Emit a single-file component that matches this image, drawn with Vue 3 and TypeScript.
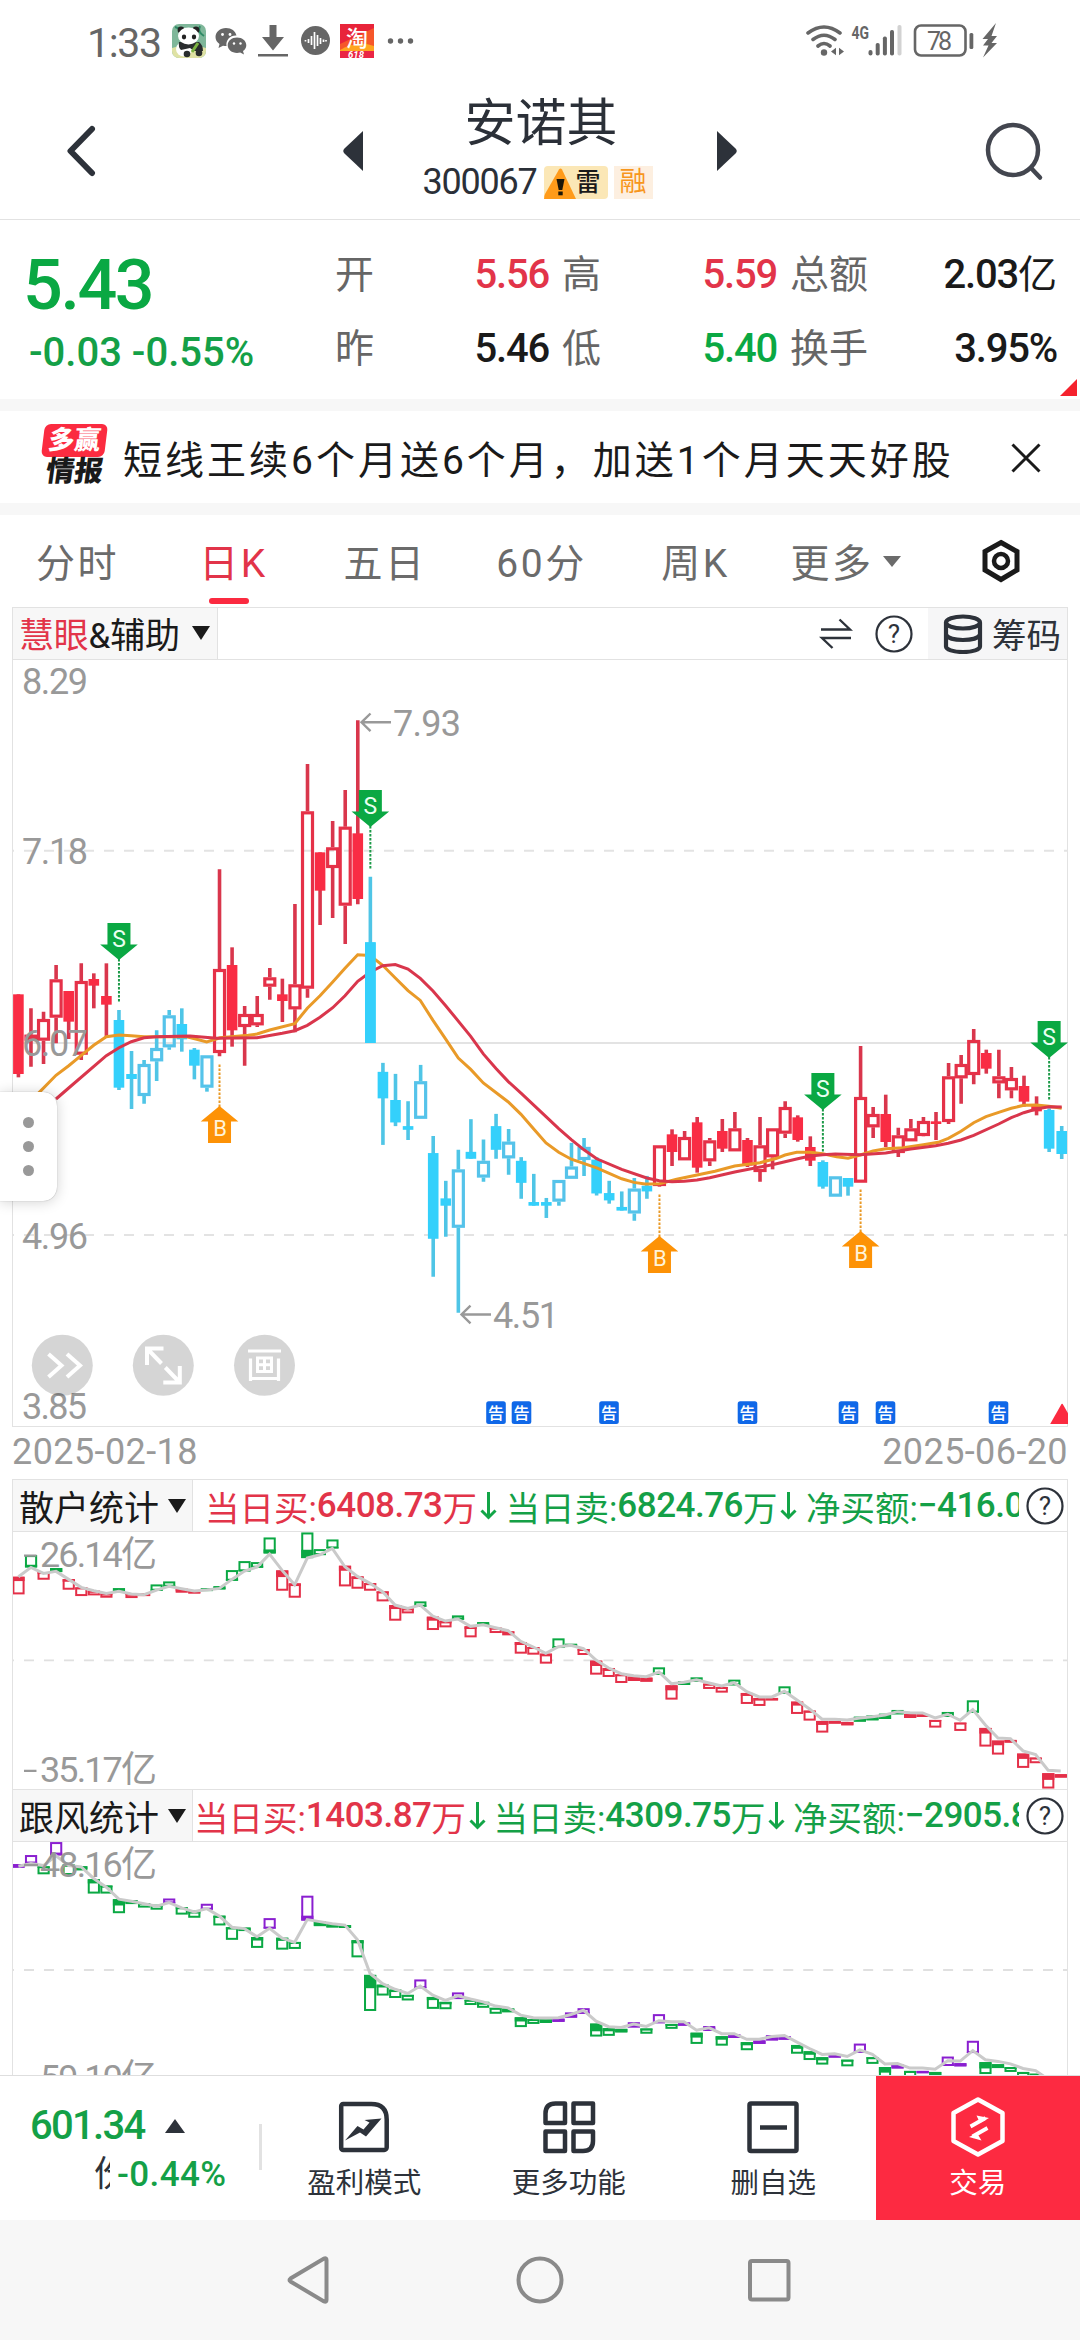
<script setup lang="ts">
type Candle = { x: number; color: string; hollow: boolean; high: number; low: number; top: number; bottom: number }
type Bar = { x: number; color: string; top: number; bottom: number; fillY: number; fillH: number }
type Block = { base: number; unit: number; rows: string }
type LineBlock = { x0: number; base: number; unit: number; pts: number[] }

const RED = '#f92c44'
const CYAN = '#34d0fb'
const GREEN = '#0aa843'
const PURPLE = '#8a1fd0'
const slotX = (i: number): number => 18.4 + 12.57 * i

// Each row: kind, high, body top, body bottom, low.
// R/C = solid red/cyan body, r/c = outlined body.
const candleBlocks: Block[] = [
  {
    base: 650, unit: 3,
    rows: `R 1033 1033 1272 1282;r 1075 1154 1172 1250;r 1085 1107 1172 1242;r 945 988 1103 1180;R 1023 1023 1115 1167;
r 940 993 1214 1230;R 970 987 1007 1075;R 940 1038 1064 1162;C 1080 1110 1313 1320;C 1203 1272 1287 1377;c 1230 1242 1338 1361;
c 1141 1194 1234 1293;c 1080 1096 1192 1199;C 1075 1122 1168 1205;C 1194 1199 1247 1288;c 1216 1216 1313 1325;r 658 957 1209 1219;
R 892 945 1141 1190;r 1068 1092 1131 1247;r 1038 1092 1126 1131;r 954 982 1010 1049;R 986 1033 1053 1116;r 762 1003 1078 1147;
r 342 484 1016 1043;R 607 607 722 825;r 513 592 654 804;r 420 530 767 882;R 211 550 747 763;C 680 877 1179 1179`
  },
  {
    base: 700, unit: 2.45,
    rows: `C 889 911 976 1090;C 916 980 1035 1044;C 983 1044 1053 1078;c 894 934 1026 1026;C 1068 1110 1320 1413;
C 1178 1221 1239 1315;c 1102 1150 1293 1501;C 1027 1107 1124 1124;c 1077 1129 1170 1180;C 1014 1044 1102 1124;c 1051 1082 1123 1163;
C 1120 1129 1183 1222;C 1161 1230 1239 1239;C 1220 1230 1239 1269;c 1176 1176 1229 1239;c 1085 1143 1173 1173;c 1073 1095 1127 1166;
C 1120 1126 1209 1214;C 1178 1208 1226 1234;C 1204 1242 1251 1251;c 1171 1197 1258 1276;C 1166 1190 1204 1222`
  },
  {
    base: 980, unit: 3,
    rows: `r 496 496 618 620;R 448 463 516 558;r 453 471 541 541;R 411 427 563 578;r 474 481 544 558;R 417 453 506 516;
r 396 445 514 514;R 474 480 557 561;r 411 496 576 605;r 445 445 532 568;r 364 381 461 474;R 406 412 480 485;R 469 501 542 558;
C 541 546 620 626;c 589 589 650 650;C 594 594 620 647;r 198 351 608 608;r 381 402 442 474;R 344 402 486 501;r 443 466 519 531;
r 417 445 484 484;r 411 423 468 469;R 396 424 432 480;r 249 289 426 432;r 225 252 295 371;r 147 180 285 313;R 209 219 266 281;
r 209 289 310 355;r 261 294 331 355;R 287 318 365 380;R 349 372 394 406;C 385 390 506 516;C 438 453 522 537`
  }
]

const candles: Candle[] = []
for (const b of candleBlocks) {
  for (const row of b.rows.split(';')) {
    const [kind, ...n] = row.trim().split(' ')
    const [high, top, bottom, low] = n.map((v) => b.base + Number(v) / b.unit)
    candles.push({
      x: slotX(candles.length),
      color: kind.toLowerCase() === 'r' ? RED : CYAN,
      hollow: kind === 'r' || kind === 'c',
      high, low, top, bottom
    })
  }
}

const linePoints = (blocks: LineBlock[]): string =>
  blocks
    .map((b) => {
      const out: string[] = []
      for (let k = 0; k < b.pts.length; k += 2) {
        out.push(`${(b.x0 + b.pts[k] / 3).toFixed(1)},${(b.base + b.pts[k + 1] / b.unit).toFixed(1)}`)
      }
      return out.join(' ')
    })
    .join(' ')

const fastLine = linePoints([
  { x0: 0, base: 650, unit: 3, pts: [95, 1348, 115, 1330, 168, 1276, 206, 1247, 243, 1217, 281, 1186, 319, 1160, 357, 1155, 394, 1157, 432, 1160, 560, 1160, 590, 1168, 620, 1176, 660, 1163, 745, 1156, 771, 1152, 809, 1140, 884, 1121, 922, 1075, 960, 1037, 998, 996, 1035, 955, 1073, 914] },
  { x0: 340, base: 700, unit: 2.45, pts: [90, 626, 128, 650, 166, 681, 204, 712, 241, 736, 279, 785, 317, 831, 355, 877, 392, 905, 430, 938, 505, 985, 543, 1015, 580, 1050, 618, 1085, 656, 1108, 694, 1125, 770, 1146, 845, 1173, 882, 1182, 915, 1186, 958, 1185] },
  { x0: 640, base: 980, unit: 3, pts: [110, 598, 171, 585, 225, 574, 284, 558, 360, 548, 410, 535, 435, 525, 470, 517, 511, 517, 548, 521, 590, 530, 624, 535, 661, 525, 699, 513, 737, 506, 790, 503, 850, 494, 895, 487, 925, 475, 963, 454, 1001, 428, 1038, 410, 1076, 397, 1114, 385, 1151, 376, 1189, 375, 1227, 379, 1265, 385] }
])
const slowLine = linePoints([
  { x0: 0, base: 650, unit: 3, pts: [168, 1347, 206, 1314, 319, 1217, 357, 1193, 394, 1175, 432, 1163, 469, 1160, 570, 1158, 650, 1165, 771, 1163, 847, 1150, 884, 1142, 922, 1126, 960, 1102, 998, 1073, 1035, 1037, 1073, 994] },
  { x0: 340, base: 700, unit: 2.45, pts: [90, 667, 128, 651, 166, 648, 204, 659, 241, 682, 279, 713, 317, 749, 392, 824, 430, 867, 468, 903, 505, 935, 543, 963, 618, 1021, 656, 1050, 694, 1077, 732, 1102, 770, 1124, 845, 1150, 920, 1171, 958, 1178] },
  { x0: 640, base: 980, unit: 3, pts: [96, 605, 133, 604, 171, 600, 209, 593, 284, 576, 397, 554, 473, 536, 511, 528, 548, 524, 586, 522, 661, 524, 737, 519, 812, 507, 887, 497, 925, 490, 963, 480, 1001, 466, 1076, 432, 1114, 413, 1151, 398, 1189, 387, 1227, 380, 1265, 381] }
])

const sells = [
  { x: slotX(8), y: 923, end: 1002 },
  { x: slotX(28), y: 790, end: 869 },
  { x: slotX(64), y: 1073, end: 1152 },
  { x: slotX(82), y: 1021, end: 1100 }
]
const buys = [
  { x: slotX(16), y: 1143, end: 1064 },
  { x: slotX(51), y: 1273, end: 1194 },
  { x: slotX(67), y: 1268, end: 1189 }
]
const notices = [496, 521.5, 609, 747.5, 848.5, 885.5, 998.5]

// Flow charts. Each row: colour key, box top, box bottom, filled part, line level.
// A falling bar fills from its top, a rising bar from its bottom.
const retailRows = `R 320 373 13 320;G 255 292 8 292;R 306 329 5 310;G 294 306 12 304;R 327 359 8 328;R 352 378 5 352;R 362 376 5 362;
R 370 383 4 370;G 354 366 4 364;R 371 384 4 372;R 370 378 8 374;G 343 362 4 360;G 334 350 4 349;R 356 368 8 356;R 360 371 8 363;
G 355 363 8 360;G 348 358 6 355;G 300 332 5 328;G 273 304 5 303;G 276 293 5 291;G 202 250 12 252;R 301 362 20 301;R 340 383 8 344;
G 187 264 25 264;G 237 255 5 254;G 208 235 4 235;R 287 349 15 290;R 319 356 8 319;R 339 362 6 340;R 364 394 5 365;R 405 452 12 405;
R 415 430 4 415;G 394 410 4 405;R 440 480 12 438;R 452 472 8 453;G 436 449 4 447;R 469 502 8 469;G 456 467 6 464;R 473 489 4 473;
R 484 496 5 482;R 516 551 9 514;R 531 554 5 531;R 551 581 8 550;G 505 534 4 530;G 521 531 9 526;R 537 555 5 536;R 572 614 16 570;
R 594 621 9 594;R 613 639 5 611;R 620 633 13 617;R 623 635 12 620;G 592 614 4 606;R 646 689 15 641;G 634 645 11 637;G 622 636 5 629;
R 641 657 5 639;R 651 668 5 648;G 629 646 5 638;R 669 702 9 665;R 684 708 8 681;R 684 691 7 681;G 649 671 4 664;R 695 732 12 690;
R 722 752 6 717;R 753 788 12 748;R 753 761 8 748;R 756 766 10 750;G 740 755 14 744;G 737 751 14 740;G 731 747 14 735;G 720 733 8 725;
R 732 744 12 728;R 733 741 8 729;R 750 773 4 744;G 726 741 6 733;R 758 783 4 751;G 691 728 4 719;R 774 830 17 765;R 812 854 14 804;
R 810 818 8 806;R 851 894 16 843;R 863 880 4 854;R 910 956 20 901;R 913 923 10 903`

const followRows = `P 214 224 10 220;P 188 213 6 212;G 220 243 5 218;P 151 189 8 190;G 215 245 6 218;G 220 232 8 222;G 257 298 12 255;
G 275 298 5 280;G 314 354 18 314;G 317 328 9 320;G 325 338 5 327;G 330 344 5 334;P 312 326 4 324;G 337 358 4 339;G 347 367 8 350;
P 327 344 5 341;G 361 389 6 362;G 394 430 6 394;G 395 405 9 398;G 422 453 10 421;P 368 398 4 397;G 424 458 9 425;G 436 456 4 437;
P 304 375 14 372;G 378 391 12 378;G 382 395 12 384;G 388 396 8 388;G 431 480 9 430;G 530 633 38 526;G 558 589 8 555;G 572 596 7 571;
G 587 603 4 583;P 543 568 4 562;G 593 627 9 588;G 607 628 7 603;P 580 599 5 590;G 601 616 4 599;G 607 624 8 607;G 624 641 4 619;
G 626 637 10 624;G 651 679 12 645;G 656 670 4 652;G 657 667 10 653;P 655 664 9 652;P 637 652 8 643;P 625 641 5 631;G 669 706 22 662;
G 682 704 9 678;G 684 694 10 680;P 665 680 8 670;G 683 698 5 677;P 642 668 4 661;G 670 684 5 664;P 666 675 9 664;G 695 727 14 688;
P 676 690 10 681;G 705 732 10 698;P 700 710 10 698;G 722 745 9 714;P 717 727 10 714;P 702 717 12 706;P 705 715 10 703;G 730 755 11 722;
G 748 773 10 740;G 765 786 9 757;P 756 766 10 755;G 772 791 5 763;P 726 752 4 744;G 765 784 4 757;G 793 822 16 784;P 786 797 11 783;
G 804 822 5 796;P 804 809 5 796;G 807 822 15 799;P 763 790 5 775;P 782 791 9 776;P 718 753 4 746;G 779 813 18 772;G 785 796 10 777;
G 793 807 5 784;G 807 824 6 797;G 812 830 8 803;G 835 850 8 828;G 840 850 8 832`

function parseFlow(src: string, base: number, unit: number): { bars: Bar[]; line: string } {
  const bars: Bar[] = []
  const pts: string[] = []
  src.split(';').forEach((row, i) => {
    const [k, a, b, f, l] = row.trim().split(' ')
    const top = base + Number(a) / unit
    const bottom = base + Number(b) / unit
    const fillH = Number(f) / unit
    const rising = src.includes('P') ? k === 'P' : k === 'G'
    bars.push({
      x: slotX(i) - 6,
      color: k === 'R' ? '#e42f48' : k === 'P' ? PURPLE : GREEN,
      top, bottom, fillH,
      fillY: rising ? bottom - fillH : top
    })
    pts.push(`${slotX(i).toFixed(1)},${(base + Number(l) / unit).toFixed(1)}`)
  })
  return { bars, line: pts.join(' ') }
}
const retail = parseFlow(retailRows, 1470, 3)
const follow = parseFlow(followRows, 1790, 2.851)

const panels = [
  {
    name: '散户统计', flow: retail, box: '13 1532 1055 257', cls: 'retail', mid: 1660.3,
    topLabel: '26.14亿', topY: 1566.5, lowLabel: '35.17亿', lowY: 1782,
    ticker: [
      { cls: 'buy', label: '当日买:', num: '6408.73', unit: '万' },
      { cls: 'sell', label: '当日卖:', num: '6824.76', unit: '万' },
      { cls: 'sell', label: '净买额:', num: '−416.02', unit: '' }
    ]
  },
  {
    name: '跟风统计', flow: follow, box: '13 1843 1055 233', cls: 'follow', mid: 1971,
    topLabel: '48.16亿', topY: 1878, lowLabel: '59.10亿', lowY: 2091.5,
    ticker: [
      { cls: 'buy', label: '当日买:', num: '1403.87', unit: '万' },
      { cls: 'sell', label: '当日卖:', num: '4309.75', unit: '万' },
      { cls: 'sell', label: '净买额:', num: '−2905.88', unit: '' }
    ]
  }
]
</script>

<template>
  <div class="screen">
    <div class="status">
      <span class="clock">1:33</span>
      <svg class="st-left" viewBox="170 20 246 42">
        <rect x="172" y="24" width="34" height="34" rx="7" fill="#7fb79a" />
        <path d="M172 48q17-6 34 0v3a7 7 0 0 1-7 7h-20a7 7 0 0 1-7-7z" fill="#dfe2a4" />
        <path d="M175 27q8 2 8 9M200 26q-3 6 4 10" stroke="#2f8a66" stroke-width="2" fill="none" />
        <circle cx="181" cy="30" r="3.4" fill="#222" /><circle cx="196" cy="30" r="3.4" fill="#222" />
        <ellipse cx="184" cy="49" rx="8" ry="7.5" fill="#fff" />
        <path d="M179 42h20q4 3 4 9h-9l-4-3-9 2q-3-3-2-8z" fill="#2a2d2e" />
        <ellipse cx="188.500" cy="36" rx="10.500" ry="8.500" fill="#fff" />
        <ellipse cx="184" cy="37" rx="2.200" ry="2.400" fill="#222" /><ellipse cx="194" cy="37" rx="2.200" ry="2.400" fill="#222" />
        <circle cx="187" cy="54" r="3.300" fill="#2a2d2e" /><circle cx="199" cy="53" r="3.300" fill="#2a2d2e" />
        <path d="M192 52l6-9" stroke="#7cb342" stroke-width="3" />
        <g fill="#666">
          <path d="M226 28c-6 0-10.500 4-10.500 9 0 3 1.500 5.300 4 7l-1 4 4.500-2.300c1.200.3 2.200.4 3.500.4-1-6 4-11 10-10.500C235.500 31 231.500 28 226 28z" />
          <path d="M237 37.500c-5.200 0-9.300 3.400-9.300 7.700s4.100 7.700 9.300 7.700c1.100 0 2.200-.2 3.200-.5l3.800 2-1-3.400c2-1.400 3.300-3.500 3.300-5.800 0-4.300-4.100-7.700-9.300-7.700z" />
          <path d="M269.500 25h7v12h7.500l-11 13.500-11-13.500h7.500zM258 54h30v2.500h-30z" />
          <circle cx="315.500" cy="40.500" r="14.500" />
          <circle cx="390.500" cy="41" r="2.700" /><circle cx="400.500" cy="41" r="2.700" /><circle cx="410.500" cy="41" r="2.700" />
        </g>
        <g fill="#fff">
          <circle cx="222.500" cy="34.500" r="1.400" /><circle cx="230" cy="34.500" r="1.400" />
          <circle cx="234" cy="43.500" r="1.200" /><circle cx="240.500" cy="43.500" r="1.200" />
        </g>
        <path d="M305.500 40v1.500M308.500 39v4M311.500 36v9M314.500 32v17M317.500 35v11M320.500 38v6M323.500 39.500v2.500M326 40v1.500" stroke="#fff" stroke-width="1.700" />
        <rect x="340" y="24" width="34" height="34" fill="#f6572a" />
        <path d="M340 24h34v4l-34 16z" fill="#e8243a" />
        <path d="M340 50q17-10 34-4v6h-34z" fill="#ffa51f" />
        <path d="M340 51h34v7h-34z" fill="#ea2544" />
        <text x="357" y="46" text-anchor="middle" class="cjk" font-size="22" font-weight="500" fill="#fff">淘</text>
        <text x="356" y="57.500" text-anchor="middle" class="lat" font-size="9.500" font-style="italic" font-weight="700" fill="#fff">618</text>
      </svg>
      <svg class="st-right" viewBox="804 20 196 42">
        <g fill="none" stroke="#666" stroke-width="3.600" stroke-linecap="round">
          <path d="M808 33q16-12 32 0M813 39.500q11-8.500 22 0M818 46q6-5 12 0" />
        </g>
        <circle cx="824" cy="52.500" r="3.200" fill="#666" />
        <path d="M831 51.500l5-3.800v7.600zM844 51.500l-5-3.800v7.600z" fill="#666" />
        <text x="851.500" y="38.500" class="lat" font-size="18.500" font-weight="700" fill="#666" textLength="17.500" lengthAdjust="spacingAndGlyphs">4G</text>
        <g fill="#666">
          <rect x="868.500" y="50" width="4" height="5.500" rx="2" /><rect x="875.700" y="43" width="4" height="12.500" rx="1.800" />
          <rect x="882.900" y="36.500" width="4" height="19" rx="1.800" /><rect x="890" y="30" width="4" height="25.500" rx="1.800" />
        </g>
        <rect x="897.500" y="25" width="4" height="30.500" rx="1.800" fill="#d2d2d2" />
        <rect x="915" y="25.500" width="50.500" height="30" rx="6" fill="none" stroke="#666" stroke-width="2.600" />
        <rect x="969.500" y="33" width="3.800" height="16" rx="1.500" fill="#666" />
        <text x="927" y="50" class="lat" font-size="25" fill="#666" textLength="25">78</text>
        <path d="M996 23l-13.500 16h5.500l-5 6.500h5.500L983 57.500l14-14.500h-5.500l5.500-7h-5.500z" fill="#666" />
      </svg>
    </div>

    <header class="head">
      <svg class="back" width="30" height="52" viewBox="0 0 30 52"><path d="M26 4L4.500 26 26 48" fill="none" stroke="#2d323a" stroke-width="6" stroke-linecap="round" stroke-linejoin="round" /></svg>
      <svg class="prev" width="20" height="40" viewBox="0 0 20 40"><path d="M20 0v40L1.500 22.500q-2.500-2.500 0-5z" fill="#2d323a" /></svg>
      <div class="name">
        <h1>安诺其</h1>
        <div class="code">
          <span class="num">300067</span>
          <span class="mine">
            <svg width="32" height="33" viewBox="0 0 32 33"><path d="M15 3.500q1.500-2 3 0L32 33H0q0-3 1-5z" fill="#ff9b1a" /><path d="M12.500 13h8L18.300 24h-3.600z" fill="#1b1608" /><rect x="14.300" y="25.500" width="4.400" height="3.800" fill="#1b1608" /></svg>雷</span>
          <span class="margin">融</span>
        </div>
      </div>
      <svg class="next" width="20" height="40" viewBox="0 0 20 40"><path d="M0 0v40l18.500-17.500q2.500-2.500 0-5z" fill="#2d323a" /></svg>
      <svg class="search" width="60" height="62" viewBox="0 0 60 62"><g fill="none" stroke="#43464f" stroke-width="4.500" stroke-linecap="round"><circle cx="29" cy="30" r="25" /><path d="M47 48l9 9.500" /></g></svg>
    </header>

    <section class="quote">
      <div class="price">
        <div class="now">5.43</div>
        <div class="chg">-0.03 -0.55%</div>
      </div>
      <div class="grid">
        <span class="k">开</span><b class="up">5.56</b><span class="k">高</span><b class="up">5.59</b><span class="k">总额</span><b>2.03<i>亿</i></b>
        <span class="k">昨</span><b>5.46</b><span class="k">低</span><b class="dn">5.40</b><span class="k">换手</span><b>3.95%</b>
      </div>
      <svg class="corner" width="17" height="17" viewBox="0 0 17 17"><path d="M17 0v17H0z" fill="#f5222d" /></svg>
    </section>

    <section class="news">
      <div class="logo">
        <span class="l1">多赢</span>
        <span class="l2">情报</span>
      </div>
      <span class="msg">短线王续6个月送6个月，加送1个月天天好股</span>
      <svg width="30" height="30" viewBox="0 0 30 30"><path d="M1.500 1.500l27 27M28.500 1.500l-27 27" stroke="#1a1a1a" stroke-width="3" /></svg>
    </section>

    <nav class="tabs">
      <span>分时</span>
      <span class="on">日K</span>
      <span>五日</span>
      <span>60分</span>
      <span>周K</span>
      <span class="more">更多<svg width="18" height="11" viewBox="0 0 18 11"><path d="M0 0h18L9 11z" fill="#6b6b6b" /></svg></span>
      <span class="gear"><svg width="40" height="44" viewBox="0 0 40 44"><path d="M20 3.500L36 12.500v18.500L20 40.500 4 31V12.500z" fill="none" stroke="#1a1a1a" stroke-width="5" /><circle cx="20" cy="22" r="7" fill="none" stroke="#1a1a1a" stroke-width="4.500" /></svg></span>
    </nav>

    <div class="bar">
      <div class="ind"><em>慧眼</em>&amp;辅助<svg width="18" height="14" viewBox="0 0 18 14"><path d="M0 0h18L9 14z" fill="#1a1a1a" /></svg></div>
      <svg class="swap" width="34" height="32" viewBox="0 0 34 32"><path d="M2 11.500h29L20.500 1.500M32 20H3l10.500 10" fill="none" stroke="#2d323a" stroke-width="2.400" /></svg>
      <svg class="q" width="40" height="40" viewBox="0 0 40 40"><circle cx="20" cy="20" r="17.500" fill="none" stroke="#2d323a" stroke-width="2.200" /><text x="20" y="29" text-anchor="middle" class="lat" font-size="26" fill="#2d323a">?</text></svg>
      <div class="chip">
        <svg width="40" height="40" viewBox="0 0 40 40"><g fill="none" stroke="#2d323a" stroke-width="4.200"><ellipse cx="20" cy="8.500" rx="17" ry="6" /><path d="M3 8.500v24c0 3 7 5.500 17 5.500s17-2.500 17-5.500v-24M3 21c2 3 8 5 17 5s15-2 17-5" /></g></svg><span>筹码</span>
      </div>
    </div>

    <div class="main">
      <svg class="kline" viewBox="13 660 1055 767">
        <g stroke="#e3e3e3" stroke-width="2">
          <path d="M4 850.700H1068M4 1235H1068" stroke-dasharray="10 10" />
          <path d="M13 1043H1068" />
        </g>
        <g v-for="(c, i) in candles" :key="i">
          <path :d="c.hollow ? `M${c.x} ${c.high}V${c.top}M${c.x} ${c.bottom}V${c.low}` : `M${c.x} ${c.high}V${c.low}`" :stroke="c.color === RED ? '#d9364c' : '#4fc5e6'" stroke-width="3.600" />
          <rect v-if="c.hollow" :x="c.x - 5" :y="c.top + 1.500" width="10" :height="Math.max(c.bottom - c.top - 3, 1)" fill="none" :stroke="c.color === RED ? '#e53148' : '#55c3ea'" stroke-width="3.200" />
          <rect v-else :x="c.x - 5.300" :y="c.top" width="10.600" :height="c.bottom - c.top" :fill="c.color" />
        </g>
        <polyline :points="fastLine" fill="none" stroke="#e99a28" stroke-width="3" />
        <polyline :points="slowLine" fill="none" stroke="#d9364c" stroke-width="3" />
        <g v-for="(c, i) in candles.slice(28, 29)" :key="'t' + i">
          <rect :x="c.x - 5.300" :y="c.top" width="10.600" :height="c.bottom - c.top" :fill="c.color" />
        </g>
        <g v-for="s in sells" :key="s.x">
          <path :d="`M${s.x} ${s.y + 36}V${s.end}`" stroke="#1c9a48" stroke-width="2" stroke-dasharray="2.500 1.500" />
          <path :d="`M${s.x - 11.500} ${s.y}h23v21.500h7.300L${s.x} ${s.y + 37}l-18.800 -15.500h7.300z`" fill="#0aa843" />
          <text :x="s.x" :y="s.y + 23.500" text-anchor="middle" class="lat" font-size="23" fill="#e9fff1">S</text>
        </g>
        <g v-for="s in buys" :key="s.x">
          <path :d="`M${s.x} ${s.y - 36}V${s.end}`" stroke="#e99a28" stroke-width="2" stroke-dasharray="2.500 1.500" />
          <path :d="`M${s.x - 11.500} ${s.y}h23v-21.500h7.300L${s.x} ${s.y - 37}l-18.800 15.500h7.300z`" fill="#fd9206" />
          <text :x="s.x + 0.500" :y="s.y - 7" text-anchor="middle" class="lat" font-size="22" fill="#fff3d8">B</text>
        </g>
        <g class="lat" font-size="36" fill="#999">
          <text x="22" y="694" textLength="66">8.29</text>
          <text x="22" y="864" textLength="66">7.18</text>
          <text x="22" y="1056" textLength="66">6.07</text>
          <text x="22" y="1248.500" textLength="66">4.96</text>
          <text x="22" y="1418.500" textLength="65">3.85</text>
          <text x="393" y="735.500" textLength="68">7.93</text>
          <text x="493" y="1327.500" textLength="66">4.51</text>
        </g>
        <path d="M391 722.300h-29M370.500 713.500l-9 8.800 9 8.800M491 1314.500h-29M470.500 1305.700l-9 8.800 9 8.800" fill="none" stroke="#999" stroke-width="2.400" />
        <g fill="#000" fill-opacity="0.165">
          <circle cx="62.300" cy="1365.300" r="30.500" /><circle cx="163.300" cy="1365.300" r="30.500" /><circle cx="264.500" cy="1365.300" r="30.500" />
        </g>
        <g fill="none" stroke="#fff" stroke-width="4">
          <path d="M48.500 1354l13 11.500-13 11.500M67 1354l13 11.500-13 11.500" />
          <path d="M147 1365v-16.500h16.500M148 1349.500l13.500 14M179.800 1366v16.500h-16.500M178.800 1381.500l-13.500-14" />
          <path d="M248 1351h33M250.500 1358.500v22.500M278.500 1358.500v22.500M250.500 1378.500h28" stroke-width="3.200" />
          <path d="M257.500 1358h14v13.500h-14zM264.500 1358v13.500M257.500 1364.800h14" stroke-width="3" />
        </g>
        <g v-for="n in notices" :key="n">
          <rect :x="n - 9.800" y="1401.300" width="19.600" height="22.700" rx="2.500" fill="#1068e8" />
          <text :x="n" y="1418.800" text-anchor="middle" class="cjk" font-size="16" font-weight="500" fill="#fff">告</text>
        </g>
        <path d="M1061.500 1404q.700-.700 1.200 0l11.500 20h-24z" fill="#fb2a40" />
      </svg>
      <div class="drawer"><i></i><i></i><i></i></div>
    </div>
    <div class="dates"><span>2025-02-18</span><span>2025-06-20</span></div>

    <template v-for="p in panels" :key="p.name">
      <div class="phead" :class="p.cls + '-head'">
        <div class="pname">{{ p.name }}<svg width="18" height="14" viewBox="0 0 18 14"><path d="M0 0h18L9 14z" fill="#1a1a1a" /></svg></div>
        <div class="ticker">
          <span v-for="t in p.ticker" :key="t.label" :class="t.cls">{{ t.label }}<b>{{ t.num }}</b>{{ t.unit }}<svg v-if="t.unit" width="17" height="28" viewBox="0 0 17 28"><path d="M8.500 0v26M1.500 18.500l7 7 7-7" fill="none" stroke="#12a547" stroke-width="3" /></svg></span>
        </div>
        <svg class="q" width="40" height="40" viewBox="0 0 40 40"><circle cx="20" cy="20" r="17.500" fill="none" stroke="#2d323a" stroke-width="2.200" /><text x="20" y="29" text-anchor="middle" class="lat" font-size="26" fill="#2d323a">?</text></svg>
      </div>
      <svg class="flow" :class="p.cls" :viewBox="p.box">
        <path :d="`M4 ${p.mid}H1068`" stroke="#e0e0e0" stroke-width="1.800" stroke-dasharray="10 10" />
        <g v-for="(b, i) in p.flow.bars" :key="i">
          <rect :x="b.x + 1" :y="b.top + 1" width="10.200" :height="Math.max(b.bottom - b.top - 2, 0.500)" fill="#fff" :stroke="b.color" stroke-width="2" />
          <rect :x="b.x" :y="b.fillY" width="12.200" :height="b.fillH" :fill="b.color" />
        </g>
        <polyline :points="p.flow.line" fill="none" stroke="#cacaca" stroke-width="3" />
        <g class="axis" font-size="36" fill="#999">
          <path v-if="p.cls === 'retail'" d="M24 1555.500h12.500M24 1771h12.500" stroke="#999" stroke-width="2.400" />
          <path v-else d="M24 1866h14" stroke="#999" stroke-width="2.400" />
          <text x="40" :y="p.topY" textLength="117">{{ p.topLabel }}</text>
          <text x="40" :y="p.lowY" textLength="117">{{ p.lowLabel }}</text>
        </g>
      </svg>
    </template>

    <footer class="foot">
      <div class="index">
        <div class="r1">601.34<svg width="20" height="14" viewBox="0 0 20 14"><path d="M10 0l10 14H0z" fill="#2d323a" /></svg></div>
        <div class="r2"><span class="cut">份</span>-0.44%</div>
      </div>
      <div class="item">
        <svg width="56" height="56" viewBox="0 0 56 56"><path d="M6 4.500h28q15.500 0 15.500 15.500v28a2.500 2.500 0 0 1-2.500 2.500H6A2 2 0 0 1 4 48.500V6.500a2 2 0 0 1 2-2z" fill="none" stroke="#2d323a" stroke-width="4.500" transform="translate(1.200 .500)" /><path d="M9 41.500L21.500 27l6 3.500 6-7-5-2.500 17-1.500-15.500 18-6-4z" fill="#2d323a" /></svg>
        <span>盈利模式</span>
      </div>
      <div class="item">
        <svg width="56" height="56" viewBox="0 0 56 56"><g fill="none" stroke="#2d323a" stroke-width="4.500" stroke-linejoin="round"><path d="M14.500 4.500h9.500v19.500H4.500V14.500q0-10 10-10zM32.500 4.500H52v19.500H32.500zM4.500 32.500H24V52H4.500zM32.500 32.500H52V42q0 10-10 10h-9.500z" /></g></svg>
        <span>更多功能</span>
      </div>
      <div class="item">
        <svg width="56" height="56" viewBox="0 0 56 56"><rect x="4.500" y="4.500" width="47" height="47.500" rx="1.500" fill="none" stroke="#2d323a" stroke-width="4.500" /><path d="M15 28.500h27" stroke="#2d323a" stroke-width="4.500" /></svg>
        <span>删自选</span>
      </div>
      <div class="item trade">
        <svg width="60" height="64" viewBox="0 0 60 64"><path d="M30 4.500L54.500 18v28L30 59.500 5.500 46V18z" fill="none" stroke="#fff" stroke-width="4.500" stroke-linejoin="round" /><path d="M22.500 31.500l15-8.500M39.500 33l-15 8.500" stroke="#fff" stroke-width="3.800" /><path d="M28.500 20.500l12.500 2.500-9 5zM33.500 45.500l-12.500-3.500 8-4z" fill="#fff" /></svg>
        <span>交易</span>
      </div>
    </footer>

    <div class="sys">
      <svg width="42" height="50" viewBox="0 0 42 50"><path d="M37 3.500q2.500-1 2.500 1.500v40q0 2.500-2.500 1.500L3.500 26.500q-2-1.500 0-3z" fill="none" stroke="#8a8a8a" stroke-width="4" /></svg>
      <svg width="50" height="50" viewBox="0 0 50 50"><circle cx="25" cy="25" r="21.500" fill="none" stroke="#8a8a8a" stroke-width="4" /></svg>
      <svg width="44" height="44" viewBox="0 0 44 44"><rect x="3" y="3" width="38.500" height="38.500" rx="2" fill="none" stroke="#8a8a8a" stroke-width="4" /></svg>
    </div>
  </div>
</template>

<style>
body { background: #fff; }
</style>

<style scoped>
.screen {
  width: 1080px; height: 2340px; overflow: hidden; background: #fff; display: flex; flex-direction: column;
  font-family: Roboto, "Noto Sans CJK SC", sans-serif; color: #1a1a1a;
}
.screen > * { flex: none; box-sizing: border-box; }
.screen svg { display: block; flex: none; }
svg text { white-space: pre; }
.lat { font-family: Roboto, sans-serif; }
.cjk { font-family: "Noto Sans CJK SC", sans-serif; }
.axis { font-family: Roboto, "Noto Sans CJK SC", sans-serif; }
i, em { font-style: normal; }
b { font-weight: 500; }

.status { height: 82px; display: flex; align-items: center; padding: 0 80px 0 87px; }
.clock { width: 83px; font-size: 41px; letter-spacing: -1.300px; color: #666; padding-top: 3px; }
.st-left { width: 246px; height: 42px; }
.st-right { width: 196px; height: 42px; margin-left: auto; }

.head { height: 138px; display: flex; align-items: center; border-bottom: 1px solid #e2e2e2; }
.back { margin-left: 66px; }
.prev { margin-left: 247px; }
.name { width: 354px; display: flex; flex-direction: column; align-items: center; padding-bottom: 9px; }
h1 { margin: 0 0 0 2px; font-size: 51px; line-height: 60px; font-weight: 400; color: #2b3038; }
.code { display: flex; align-items: center; height: 33px; margin-top: 12px; margin-left: -4px; }
.num { font-size: 36px; letter-spacing: -1.200px; color: #2b3038; margin-right: 7px; margin-left: -1px; }
.mine { display: flex; align-items: center; width: 64px; height: 33px; background: #fbe7b6; border-radius: 4px; font-size: 25px; font-weight: 500; line-height: 33px; white-space: nowrap; }
.margin { width: 39px; height: 33px; margin-left: 6px; background: #fdefe0; color: #f7961c; font-size: 27px; line-height: 33px; text-align: center; }
.search { margin-left: 247px; }

.quote { height: 179px; position: relative; display: flex; }
.price { width: 334px; flex: none; box-sizing: border-box; padding-left: 23px; color: #0aa843; }
.now { font-size: 70px; line-height: 70px; margin-top: 30px; font-weight: 500; letter-spacing: -2.400px; }
.chg { font-size: 40px; line-height: 44px; margin: 11px 0 0 6px; font-weight: 500; white-space: nowrap; letter-spacing: 0; color: #14a047; }
.grid { flex: none; display: grid; grid-template-columns: 64px 163px 64px 164px 100px 178px; grid-template-rows: 74px 74px; margin-top: 18px; align-items: center; margin-left: 1px; }
.grid > * { line-height: 50px; }
.k { font-size: 39px; color: #666; white-space: nowrap; }
.grid b { font-size: 40px; text-align: right; padding-right: 13px; letter-spacing: -1.200px; white-space: nowrap; }
.grid b:nth-child(6n) { padding-right: 11px; }
.grid b i { font-size: 39px; font-weight: 400; letter-spacing: 0; line-height: 1; }
.up { color: #e23449; }
.dn { color: #0aa843; }
.corner { position: absolute; right: 3px; bottom: 3px; }

.news { height: 116px; border: solid #f7f7f7; border-width: 12px 0; display: flex; align-items: center; padding-left: 40px; }
.logo { width: 69px; height: 66px; display: flex; flex-direction: column; align-items: center; box-sizing: border-box; }
.l1 { width: 63px; height: 33px; background: #fb2b40; border-radius: 6px; color: #fff; font-size: 26px; font-weight: 900; line-height: 32px; text-align: center; transform: skewX(-7deg); }
.l2 { margin-top: -1px; font-size: 28.500px; line-height: 32px; font-weight: 900; transform: skewX(-8deg); white-space: nowrap; }
.msg { margin-left: 14px; width: 888px; font-size: 39px; letter-spacing: 3px; white-space: nowrap; color: #1a1a1a; }
.news > svg { margin-top: 2px; }

.tabs { height: 92px; display: grid; grid-template-columns: 155px 157px 146px 167px 141px 159px 152px; align-items: center; justify-items: center; font-size: 39px; letter-spacing: 2.500px; color: #6b6b6b; }
.tabs > span { height: 92px; line-height: 98px; position: relative; white-space: nowrap; }
.tabs .on { color: #e23449; }
.on::after { content: ""; position: absolute; left: 10px; bottom: 3px; width: 40px; height: 6px; border-radius: 3px; background: #fb2a40; }
.tabs .more, .tabs .gear { display: flex; align-items: center; }
.tabs .more { box-sizing: border-box; padding-top: 6px; }
.more svg { margin-left: 9px; margin-bottom: 5px; }

.bar { height: 53px; margin: 0 12px; border: 1px solid #e2e2e2; display: flex; align-items: center; }
.ind { height: 51px; width: 205px; box-sizing: border-box; background: #f7f7f7; border-right: 1px solid #e2e2e2; display: flex; align-items: center; padding: 0 0 2px 6px; font-size: 35px; white-space: nowrap; letter-spacing: -.200px; }
.ind em { color: #e23449; }
.ind svg { margin-left: auto; margin-right: 7px; }
.swap { margin-left: 601px; }
.bar .q { margin-left: 21px; }
.chip { margin-left: auto; width: 139px; height: 51px; background: #f6f6f7; display: flex; align-items: center; gap: 9px; box-sizing: border-box; padding-left: 15px; font-size: 34.500px; color: #2d323a; }
.chip span { padding-bottom: 2px; }

.main { height: 767px; margin: 0 12px; border: solid #e2e2e2; border-width: 0 1px 1px; position: relative; }
.kline { width: 1055px; height: 767px; margin: 0 -0.500px; }
.drawer { position: absolute; left: -13px; top: 432px; width: 57px; height: 109px; background: #fff; border-radius: 0 14px 14px 0; box-shadow: 0 1px 14px rgba(0,0,0,.18), 0 0 1px rgba(0,0,0,.4); display: flex; flex-direction: column; align-items: center; justify-content: center; gap: 13px; }
.drawer i { width: 11px; height: 11px; border-radius: 50%; background: #999; }
.dates { height: 52px; display: flex; justify-content: space-between; align-items: center; padding: 0 12px 2px; font-size: 36px; letter-spacing: .400px; color: #999; }

.phead { height: 53px; margin: 0 12px; border: 1px solid #e2e2e2; display: flex; align-items: center; }
.pname { height: 51px; width: 180px; box-sizing: border-box; background: #f7f7f7; border-right: 1px solid #e2e2e2; display: flex; align-items: center; padding-left: 6px; font-size: 35px; white-space: nowrap; }
.pname svg { margin-left: 9px; }
.ticker { width: 814px; margin-left: 12px; display: flex; overflow: hidden; font-size: 34.500px; white-space: nowrap; }
.follow-head .ticker { width: 825px; margin-left: 1px; }
.ticker span { width: 300.500px; flex: none; display: flex; align-items: center; }
.follow-head .ticker span { width: 299.500px; }
.ticker b { font-size: 35px; letter-spacing: -.500px; }
.ticker svg { margin-left: 3px; }
.ticker .buy { color: #e23449; }
.ticker .sell { color: #14a047; }
.phead .q { margin-left: auto; margin-right: 2px; }
.flow { margin: 0 12px; width: 1056px; border: solid #e2e2e2; border-width: 0 1px; }
.retail { height: 257px; }
.follow { height: 233px; }

.foot { height: 145px; border-top: 1px solid #dedede; display: flex; position: relative; }
.index { width: 262px; position: relative; font-weight: 500; color: #14a047; }
.index::after { content: ""; position: absolute; right: 0; top: 48px; width: 3px; height: 46px; background: #e2e2e2; }
.r1 { display: flex; align-items: center; margin: 27px 0 0 30px; font-size: 40px; line-height: 46px; letter-spacing: -1.700px; }
.r1 svg { margin-left: 20px; }
.r2 { display: flex; align-items: center; margin: 6px 0 0 94px; font-size: 35px; line-height: 40px; letter-spacing: .400px; }
.cut { width: 16px; height: 40px; margin-right: 7px; overflow: hidden; color: #2d323a; font-weight: 400; }
.item { width: 204.500px; display: flex; flex-direction: column; align-items: center; font-size: 28.500px; color: #2d323a; padding-top: 23px; box-sizing: border-box; }
.item span { line-height: 36px; margin-top: 11px; }
.trade { background: #fd2a41; color: #fff; padding-top: 19px; }
.trade span { margin-top: 7px; }
.sys { height: 120px; background: #f7f7f7; display: flex; align-items: center; padding-left: 287px; }
.sys svg:nth-child(2) { margin-left: 186px; }
.sys svg:nth-child(3) { margin-left: 182px; }
</style>
